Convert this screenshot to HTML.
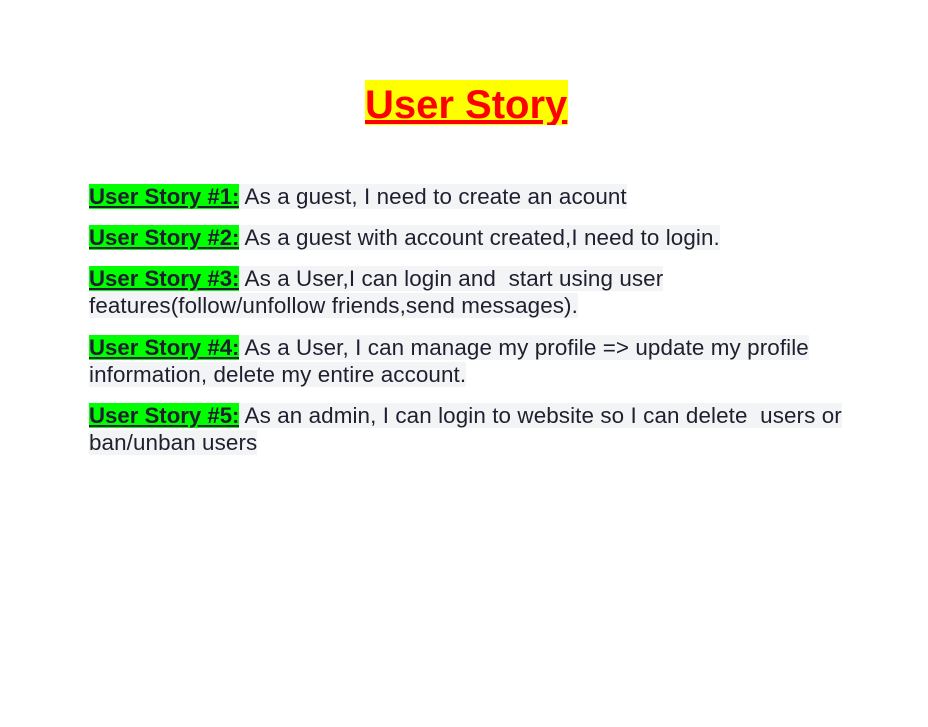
<!DOCTYPE html>
<html><head><meta charset="utf-8"><style>
body{margin:0;width:928px;height:727px;background:#fff;position:relative;font-family:"Liberation Sans",Arial,sans-serif;overflow:hidden}
.t{position:absolute;left:365px;top:80px;height:42px;padding-top:3px;line-height:45px;font-size:40px;font-weight:bold;color:#f00;background:#ff0;text-decoration:underline;text-decoration-thickness:4px;text-underline-offset:2px;white-space:nowrap;overflow:hidden;width:203px}
.l{position:absolute;left:89px;height:26px;line-height:27px;font-size:22.4px;color:#1f1f2f;white-space:pre}
.g{background:#00ff00;font-weight:bold;text-decoration:underline;text-decoration-thickness:2px;text-underline-offset:2px;font-size:22.2px}
.s{background:#f3f4f6;letter-spacing:0.1px}
</style></head><body>
<div class="t">User Story</div>
<div class="l" style="top:183px"><span class="g">User Story #1:</span><span class="s"> As a guest, I need to create an acount</span></div>
<div class="l" style="top:224px"><span class="g">User Story #2:</span><span class="s"> As a guest with account created,I need to login.</span></div>
<div class="l" style="top:265px"><span class="g">User Story #3:</span><span class="s"> As a User,I can login and  start using user</span></div>
<div class="l" style="top:292px"><span class="s">features(follow/unfollow friends,send messages).</span></div>
<div class="l" style="top:334px"><span class="g">User Story #4:</span><span class="s"> As a User, I can manage my profile =&gt; update my profile</span></div>
<div class="l" style="top:361px"><span class="s">information, delete my entire account.</span></div>
<div class="l" style="top:402px"><span class="g">User Story #5:</span><span class="s"> As an admin, I can login to website so I can delete  users or</span></div>
<div class="l" style="top:429px"><span class="s">ban/unban users</span></div>
</body></html>
